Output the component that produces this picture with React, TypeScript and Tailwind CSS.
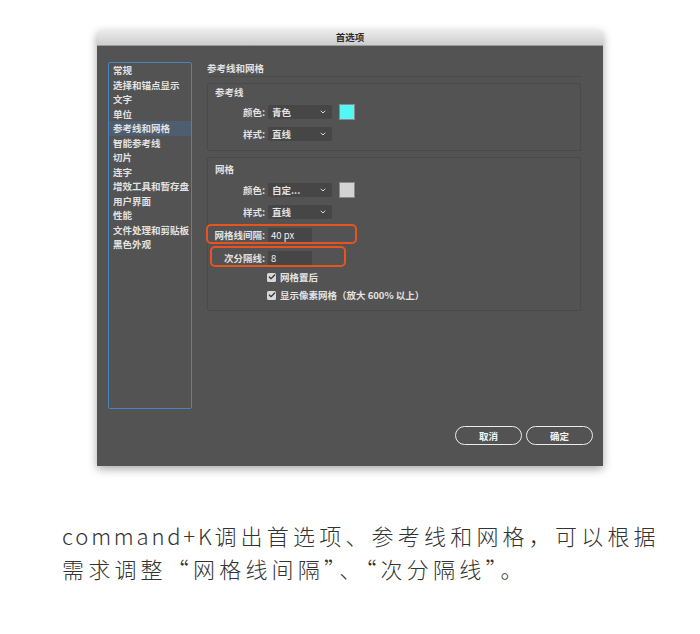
import { Check, ChevronDown } from 'lucide-react';

const sideItems = [
  '常规',
  '选择和锚点显示',
  '文字',
  '单位',
  '参考线和网格',
  '智能参考线',
  '切片',
  '连字',
  '增效工具和暂存盘',
  '用户界面',
  '性能',
  '文件处理和剪贴板',
  '黑色外观',
];

function Label({ text }: { text: string }) {
  return <div className="w-[58px] shrink-0 text-right pr-[1px]">{text}</div>;
}

function Select({ value }: { value: string }) {
  return (
    <div className="ml-[2px] flex h-[14px] w-[64px] items-center justify-between rounded-[2px] bg-[#464646] pl-[4px] pr-[5px]">
      <span>{value}</span>
      <ChevronDown size={8} strokeWidth={3} className="text-[#d6d6d6]" />
    </div>
  );
}

function Swatch({ color }: { color: string }) {
  return <div className={`ml-[7px] h-[16px] w-[16px] border border-[#8a8a8a] ${color}`} />;
}

function Field({ value }: { value: string }) {
  return (
    <div className="ml-[2px] flex h-[14px] w-[44px] items-center bg-[#464646] pl-[3px] font-normal text-[#f0f0f0]">
      {value}
    </div>
  );
}

function CheckRow({ text }: { text: string }) {
  return (
    <div className="flex h-[14px] items-center pl-[59px]">
      <div className="flex h-[9px] w-[9px] items-center justify-center rounded-[1.5px] bg-[#d8d8d8]">
        <Check size={8} strokeWidth={4} className="text-[#3a3a3a]" />
      </div>
      <span className="ml-[4px]">{text}</span>
    </div>
  );
}

export default function App() {
  return (
    <div className="h-[634px] w-[700px] overflow-hidden bg-white pt-[30px] font-['Noto_Sans_CJK_SC',sans-serif]">
      <div className="ml-[97px] w-[506px] overflow-hidden rounded-t-[4px] shadow-[0_3px_10px_rgba(0,0,0,0.35)]">
        <div className="flex h-[16px] items-center justify-center border-b border-[#9a9a9a] bg-gradient-to-b from-[#ececec] to-[#cdcdcd] text-[9.5px] font-bold leading-none text-[#2e2e2e]">
          首选项
        </div>
        <div className="flex h-[420px] flex-col bg-[#535353] text-[9.5px] font-bold leading-[12px] text-[#e2e2e2]">
          <div className="flex pl-[11px] pt-[16px]">
            <div className="h-[347px] w-[84px] rounded-[2px] border border-[#4b84bc]">
              {sideItems.map((item) => (
                <div
                  key={item}
                  className={`h-[14.5px] pl-[4px] leading-[14.5px] ${item === '参考线和网格' ? 'bg-[#4e5d70]' : ''}`}
                >
                  {item}
                </div>
              ))}
            </div>

            <div className="ml-[15px] w-[375px]">
              <div className="h-[15px] border-b border-[#4a4a4a]">参考线和网格</div>

              <div className="mt-[6px] h-[68px] w-[374px] rounded-[2px] border border-[#4a4a4a] pt-[2px]">
                <div className="pl-[7px]">参考线</div>
                <div className="mt-[6px] flex h-[16px] items-center">
                  <Label text="颜色:" />
                  <Select value="青色" />
                  <Swatch color="bg-[#52f7f7]" />
                </div>
                <div className="mt-[6px] flex h-[16px] items-center">
                  <Label text="样式:" />
                  <Select value="直线" />
                </div>
              </div>

              <div className="relative mt-[6px] h-[154px] w-[374px] rounded-[2px] border border-[#4a4a4a] pt-[5px]">
                <div className="pl-[7px]">网格</div>
                <div className="mt-[6px] flex h-[17px] items-center">
                  <Label text="颜色:" />
                  <Select value="自定..." />
                  <Swatch color="bg-[#d3d3d3]" />
                </div>
                <div className="mt-[6px] flex h-[16px] items-center">
                  <Label text="样式:" />
                  <Select value="直线" />
                </div>
                <div className="mt-[7px] flex h-[16px] items-center">
                  <Label text="网格线间隔:" />
                  <Field value="40 px" />
                </div>
                <div className="mt-[7px] flex h-[16px] items-center">
                  <Label text="次分隔线:" />
                  <Field value="8" />
                </div>
                <div className="mt-[4px]">
                  <CheckRow text="网格置后" />
                </div>
                <div className="mt-[4px]">
                  <CheckRow text="显示像素网格（放大 600% 以上）" />
                </div>

                <div className="absolute left-[-2px] top-[66px] h-[20px] w-[151px] rounded-[5px] border-2 border-[#e8541f]" />
                <div className="absolute left-[2px] top-[88px] h-[21px] w-[136px] rounded-[5px] border-2 border-[#e8541f]" />
              </div>
            </div>
          </div>

          <div className="mt-auto mb-[21px] mr-[10px] flex justify-end gap-[4px]">
            <button className="h-[19px] w-[67px] rounded-full border-[1.5px] border-[#ececec] text-[9.5px] font-bold text-[#f2f2f2]">
              取消
            </button>
            <button className="h-[19px] w-[67px] rounded-full border-[1.5px] border-[#ececec] text-[9.5px] font-bold text-[#f2f2f2]">
              确定
            </button>
          </div>
        </div>
      </div>

      <div className="ml-[62px] mt-[53px] text-[22px] font-light leading-[33px] tracking-[4.2px] text-[#333333]">
        <p>
          <span className="tracking-[2.8px]">command+K</span>调出首选项、参考线和网格，可以根据
        </p>
        <p>需求调整“网格线间隔”、“次分隔线”。</p>
      </div>
    </div>
  );
}
